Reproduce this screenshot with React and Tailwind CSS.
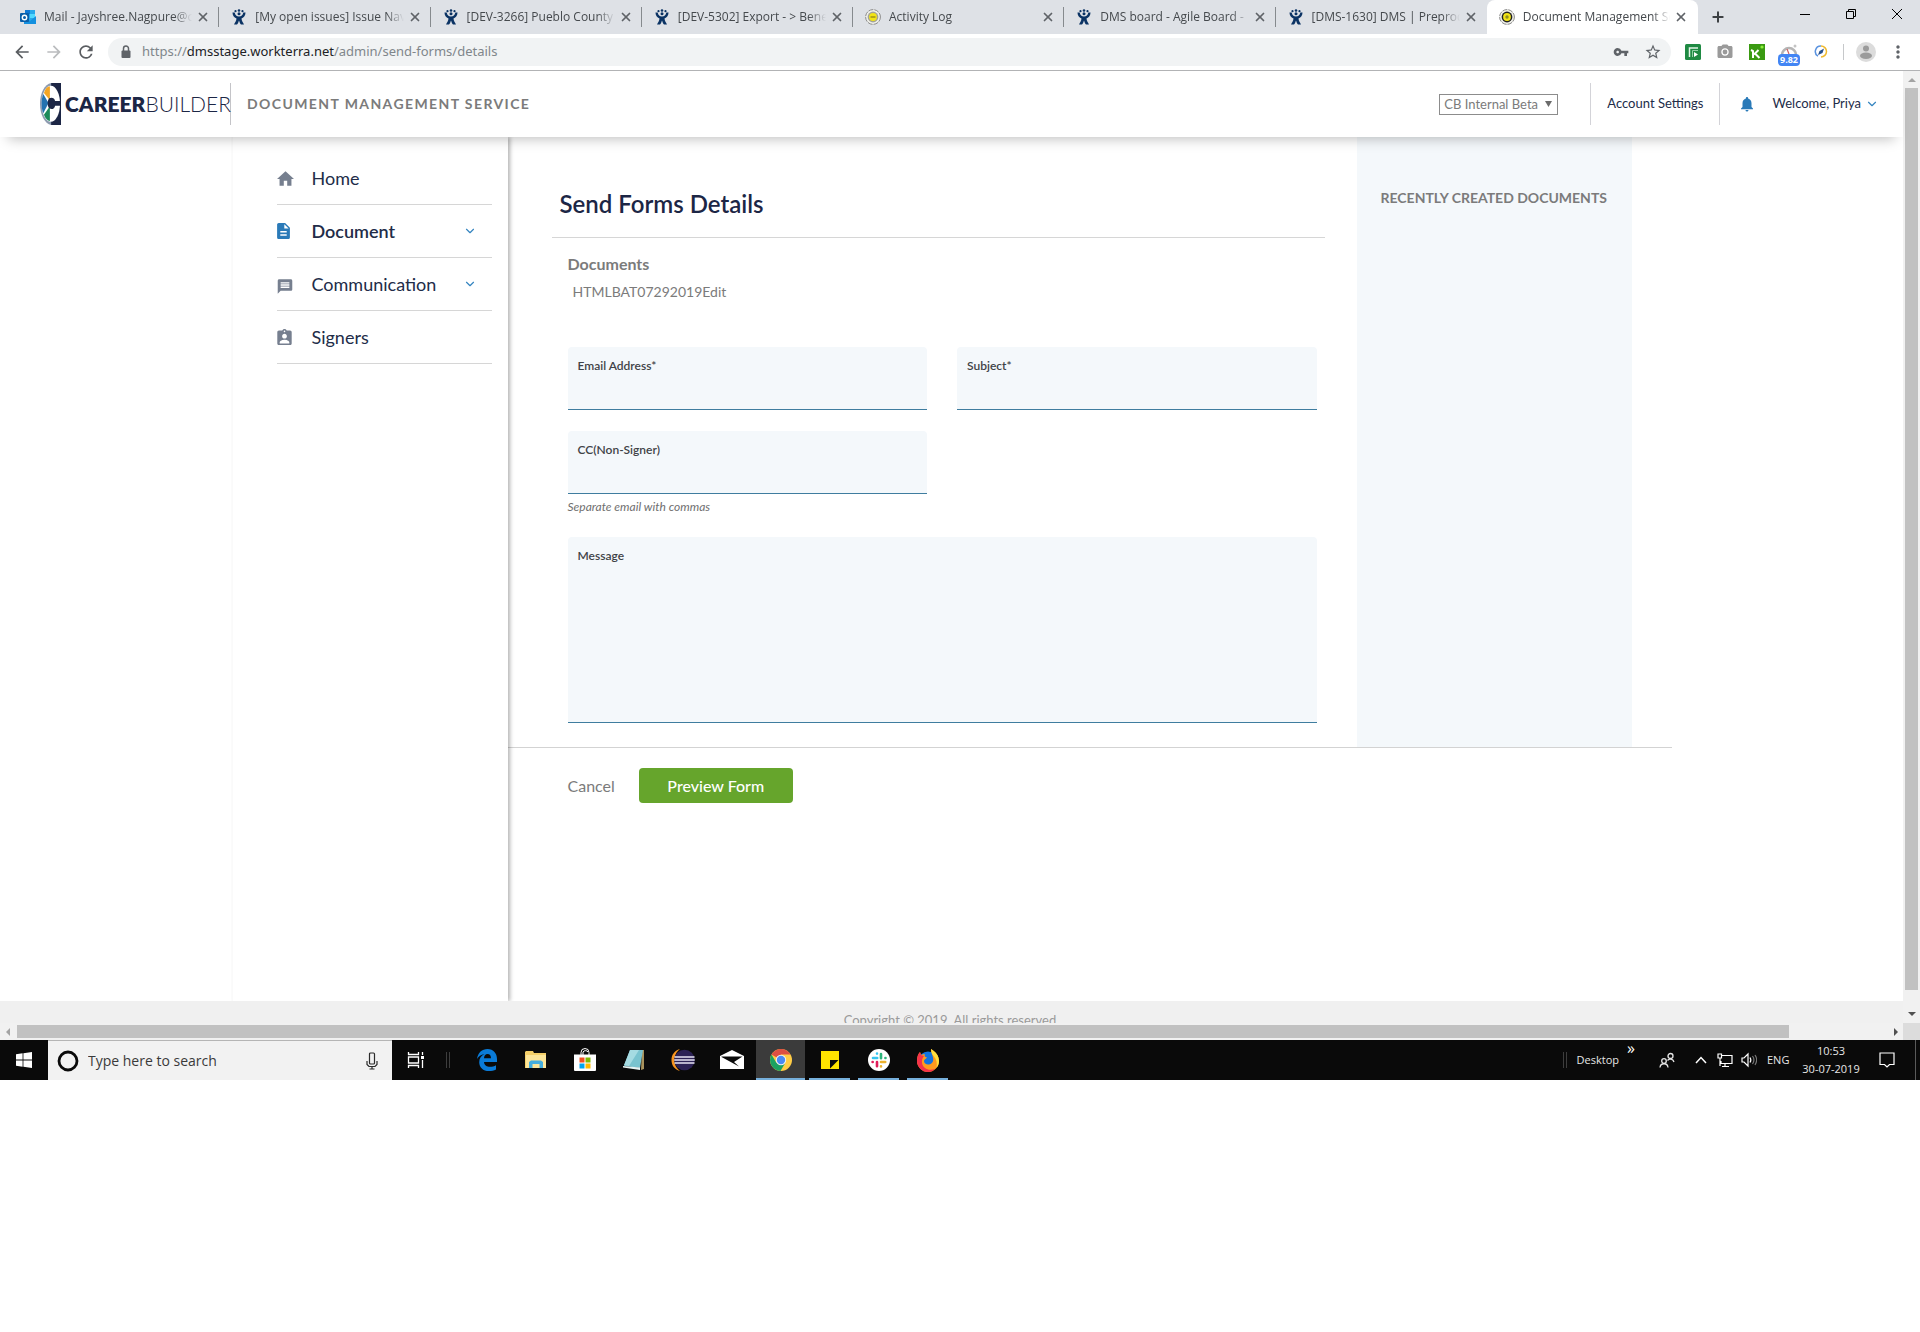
import { useState } from 'react';
import { MdVpnKey, MdStarBorder, MdCameraAlt, MdRefresh, MdArrowBack, MdArrowForward, MdLock, MdMoreVert, MdNotifications } from 'react-icons/md';
import { ChevronDown, X, Plus } from 'lucide-react';

const tabs = [
  { title: 'Mail - Jayshree.Nagpure@c', icon: 'outlook' },
  { title: '[My open issues] Issue Navi', icon: 'jira' },
  { title: '[DEV-3266] Pueblo County', icon: 'jira' },
  { title: '[DEV-5302] Export - > Bene', icon: 'jira' },
  { title: 'Activity Log', icon: 'seal' },
  { title: 'DMS board - Agile Board -', icon: 'jira' },
  { title: '[DMS-1630] DMS | Preprod', icon: 'jira' },
  { title: 'Document Management Se', icon: 'target', active: true },
];

const navItems = [
  { label: 'Home', icon: 'home' },
  { label: 'Document', icon: 'document', active: true, expandable: true },
  { label: 'Communication', icon: 'message', expandable: true },
  { label: 'Signers', icon: 'signer' },
];

const taskbarApps = [
  { name: 'edge' },
  { name: 'explorer' },
  { name: 'store' },
  { name: 'notepad' },
  { name: 'eclipse' },
  { name: 'mail' },
  { name: 'chrome', open: true, focused: true },
  { name: 'sticky', open: true },
  { name: 'slack', open: true },
  { name: 'firefox', open: true },
];

function TabIcon({ name }) {
  if (name === 'outlook') {
    return (
      <svg className="w-4 h-4 shrink-0" viewBox="0 0 16 16">
        <path d="M5 1h10v11H5z" fill="#28a8ea" />
        <path d="M5 1h5v4H5z" fill="#0f78d4" />
        <path d="M10 5h5v4h-5z" fill="#50d9ff" />
        <path d="M4 8l6 4 6-5v8H4z" fill="#1490df" />
        <rect y="4" width="9" height="9" rx="1" fill="#0a5ea8" />
        <circle cx="4.5" cy="8.5" r="2.2" fill="none" stroke="#fff" strokeWidth="1.4" />
      </svg>
    );
  }
  if (name === 'jira') {
    return (
      <svg className="w-4 h-4 shrink-0" viewBox="0 0 16 16" fill="#0b3364">
        <circle cx="8" cy="1.5" r="1.3" />
        <circle cx="4.5" cy="2.2" r="1.1" />
        <circle cx="11.5" cy="2.2" r="1.1" />
        <circle cx="8" cy="4.8" r="1.5" />
        <path d="M1.5 3.5h2.2c.4 2.6 2 4 4.3 4s3.9-1.4 4.3-4h2.2c0 3-1.5 5-4 6 .2 2.5 1.5 4 2.5 6h-3c-1-1-1.5-2.500-2-4-.5 1.500-1 3-2 4H3c1-2 2.300-3.500 2.500-6-2.500-1-4-3-4-6z" />
      </svg>
    );
  }
  return (
    <svg className="w-4 h-4 shrink-0" viewBox="0 0 16 16">
      <circle cx="8" cy="8" r="7.4" fill="#f0f0ea" stroke="#8b8b8b" strokeWidth="1" strokeDasharray="5 1" />
      <circle cx="8" cy="8" r="5.4" fill={name === 'target' ? '#222' : '#a3a39a'} />
      <circle cx="8" cy="8" r="3.9" fill="#f2e416" />
      {name === 'target' ? (
        <circle cx="8" cy="8" r="1.7" fill="#8f8d20" />
      ) : (
        <path d="M5.5 8h5" stroke="#8a7d1c" strokeWidth="1.2" />
      )}
    </svg>
  );
}

function TabStrip() {
  return (
    <div className="flex h-[34px] bg-[#dee1e6] pl-2">
      <div className="grid flex-1 max-w-[1690px] grid-cols-8">
        {tabs.map((tab, i) => (
          <div
            key={tab.title}
            className={`flex min-w-0 items-center pl-3 ${tab.active ? 'bg-white rounded-t-lg pr-2.5' : ''}`}
          >
            <TabIcon name={tab.icon} />
            <span className="ml-2 flex-1 min-w-0 overflow-hidden whitespace-nowrap text-xs text-[#45494d] [mask-image:linear-gradient(to_right,black_88%,transparent)]">
              {tab.title}
            </span>
            <button type="button" aria-label="Close tab" className="ml-1 text-[#5f6368]">
              <X className="w-3.5 h-3.5" strokeWidth={3} />
            </button>
            {!tab.active && <span className={`ml-2 w-px h-5 ${i === 6 ? 'bg-transparent' : 'bg-[#868a8e]'}`}></span>}
          </div>
        ))}
      </div>
      <button type="button" aria-label="New tab" className="ml-3 text-[#3c4043]">
        <Plus className="w-4 h-4" strokeWidth={3} />
      </button>
      <div className="ml-auto flex h-7 items-center">
        <button type="button" aria-label="Minimize" className="w-[46px] flex justify-center">
          <svg className="w-3 h-3" viewBox="0 0 12 12" stroke="#000"><path d="M1 6.500h10" /></svg>
        </button>
        <button type="button" aria-label="Restore" className="w-[46px] flex justify-center">
          <svg className="w-3 h-3" viewBox="0 0 12 12" fill="none" stroke="#000"><path d="M1.500 3.500h7v7h-7zM3.500 3.500v-2h7v7h-2" /></svg>
        </button>
        <button type="button" aria-label="Close window" className="w-[46px] flex justify-center">
          <svg className="w-3 h-3" viewBox="0 0 12 12" stroke="#000"><path d="M1 1l10 10M11 1L1 11" /></svg>
        </button>
      </div>
    </div>
  );
}

function Toolbar() {
  return (
    <div className="flex h-[37px] items-center border-b border-[#b2b3b5] bg-white pl-1.5 pr-3">
      <button type="button" aria-label="Back" className="w-8 flex justify-center text-[#5a5d61]"><MdArrowBack className="w-5 h-5" /></button>
      <button type="button" aria-label="Forward" className="w-8 flex justify-center text-[#babcbe]"><MdArrowForward className="w-5 h-5" /></button>
      <button type="button" aria-label="Reload" className="w-8 flex justify-center text-[#5a5d61]"><MdRefresh className="w-5 h-5" /></button>
      <div className="ml-1.5 flex h-7 flex-1 items-center rounded-full bg-[#f1f3f4] pl-2.5 pr-0.5">
        <svg className="w-4 h-3.5" viewBox="0 0 16 14"><path d="M5.500 6V3.500a2.500 2.500 0 015 0V6" fill="none" stroke="#5f6368" strokeWidth="1.500" /><rect x="3.500" y="5.500" width="9" height="7.500" rx="1" fill="#5f6368" /></svg>
        <div className="ml-2 flex-1 font-['Noto_Sans','Open_Sans',sans-serif] text-[13px] text-[#80868b]">
          https://<span className="text-[#202124]">dmsstage.workterra.net</span>/admin/send-forms/details
        </div>
        <button type="button" aria-label="Saved passwords" className="w-8 flex justify-center text-[#5f6368]"><MdVpnKey className="w-4 h-4" /></button>
        <button type="button" aria-label="Bookmark" className="w-8 flex justify-center text-[#5f6368]"><MdStarBorder className="w-[18px] h-[18px]" /></button>
      </div>
      <div className="ml-1.5 flex items-center">
        <div className="w-8 flex justify-center">
          <svg className="w-4 h-4" viewBox="0 0 16 16">
            <rect width="16" height="16" rx="1.5" fill="#1f8a43" />
            <path d="M4.500 13V4h8.500" fill="none" stroke="#e4f5e8" strokeWidth="1.500" />
            <path d="M7.500 13V6.500H13" fill="none" stroke="#8fcfa3" strokeWidth="1" />
            <path d="M9 8l4 2.500L9 13z" fill="#fff" />
          </svg>
        </div>
        <div className="w-8 flex justify-center text-[#9a9a9a]"><MdCameraAlt className="w-[18px] h-[18px]" /></div>
        <div className="w-8 flex justify-center">
          <svg className="w-4 h-4" viewBox="0 0 16 16">
            <rect width="16" height="16" fill="#3a9a12" />
            <path d="M2 6l2 1v7M5 10.500L9.500 6M6 9.500l4.500 4.500" fill="none" stroke="#fff" strokeWidth="2" />
            <circle cx="13" cy="3" r="1.600" fill="#8df03a" />
          </svg>
        </div>
        <div className="relative w-8 h-7 flex justify-center">
          <svg className="mt-1.5 w-4 h-4" viewBox="0 0 16 16" fill="none">
            <path d="M1 11a7 7 0 0114 0" stroke="#b5b5b5" strokeWidth="2.500" />
            <path d="M8 10L6 5" stroke="#d06060" strokeWidth="1.200" />
            <circle cx="14" cy="2" r="1.500" fill="#c4c4c4" />
          </svg>
          <span className="absolute bottom-0 left-[5px] right-[5px] rounded-sm bg-[#4285f4] text-center text-[9px] font-bold leading-3 text-white">9.82</span>
        </div>
        <div className="w-8 flex justify-center">
          <svg className="w-3.5 h-3.5" viewBox="0 0 14 14" fill="none">
            <path d="M7 1a5.500 5.500 0 00-3 10.200" stroke="#5a93e0" strokeWidth="1.500" />
            <path d="M7 1a5.500 5.500 0 010 11" stroke="#f0b92d" strokeWidth="1.500" />
            <path d="M4 10l1.500-4L10 3.500 8.500 8z" fill="#27508c" />
          </svg>
        </div>
      </div>
      <span className="ml-1.5 h-4 w-px bg-[#c6c8ca]"></span>
      <svg className="ml-3 w-5 h-5" viewBox="0 0 20 20">
        <circle cx="10" cy="10" r="10" fill="#dcdcdc" />
        <circle cx="10" cy="6.500" r="3" fill="#9b9b9b" />
        <ellipse cx="10" cy="13.800" rx="6" ry="3.200" fill="#9b9b9b" />
      </svg>
      <button type="button" aria-label="Menu" className="ml-3 text-[#5f6368]"><MdMoreVert className="w-5 h-5" /></button>
    </div>
  );
}

function Logo() {
  return (
    <div className="flex h-[42px] w-[191px] items-center border-r border-[#c4c4c8] text-[#1c2645]">
      <svg className="w-[21px] h-[42px] shrink-0" viewBox="0 0 64 126" preserveAspectRatio="none">
        <path d="M34 0h30v126H34C14 122 0 94 0 62S14 4 34 0z" fill="#8d9bb0" />
        <path d="M34 0h30v126H34z" fill="#1c2645" />
        <ellipse cx="33" cy="62" rx="28" ry="54" fill="#fff" />
        <path d="M30 52L12 30C16 17 22 11 30 10z" fill="#f5a623" />
        <path d="M26 60L10 33c-7 16-7 42 0 58z" fill="#2372b0" />
        <path d="M30 70L12 95c5 12 11 18 18 19z" fill="#1b8a5a" />
        <path d="M28 46c9-4 16 0 18 8h18v14H46c-2 9-9 13-18 8-6-7-6-23 0-30z" fill="#1c2645" />
      </svg>
      <span className="ml-1 whitespace-nowrap text-[21px] font-light leading-10">
        <b className="font-extrabold">CAREER</b>BUILDER
      </span>
    </div>
  );
}

function PageHeader() {
  const [company, setCompany] = useState('CB Internal Beta');

  return (
    <header className="relative z-10 flex h-[66px] items-center bg-white pl-10 pr-6 shadow-[0_10px_12px_-8px_rgba(0,0,0,0.25)]">
      <Logo />
      <span className="ml-4 whitespace-nowrap text-sm font-bold tracking-widest text-[#7b7b7b]">DOCUMENT MANAGEMENT SERVICE</span>
      <div className="ml-auto flex items-center text-[13px] text-[#222c48]">
        <div className="relative mr-8">
          <select
            aria-label="Company"
            value={company}
            onChange={(e) => setCompany(e.target.value)}
            className="block w-[119px] h-[21px] appearance-none border border-[#8c8c8c] bg-white pl-1 text-[13px] leading-4 text-[#7b7b7b]"
          >
            <option>CB Internal Beta</option>
          </select>
          <svg className="pointer-events-none absolute right-1.5 top-[7px] w-[7px] h-1.5" viewBox="0 0 7 6" fill="#6b6b6b"><path d="M0 0h7L3.500 6z" /></svg>
        </div>
        <a href="#account" className="flex h-[42px] items-center border-x border-[#d3d3d8] px-4">Account Settings</a>
        <MdNotifications className="ml-3 h-[18px] w-[30px] text-[#2a7ab8]" />
        <button type="button" className="ml-2.5 flex items-center gap-1">
          Welcome, Priya
          <ChevronDown className="w-3.5 h-3.5 text-[#3585c0]" strokeWidth={2} />
        </button>
      </div>
    </header>
  );
}

function NavIcon({ name }) {
  if (name === 'home') {
    return <svg className="w-[17px] h-[15px]" viewBox="2 3 20 17" fill="#767f8f"><path d="M10 20v-6h4v6h5v-8h3L12 3 2 12h3v8z" /></svg>;
  }
  if (name === 'document') {
    return (
      <svg className="w-[13px] h-4" viewBox="4 2 16 20" fill="#2a7ab8">
        <path d="M14 2H6c-1.100 0-1.990.9-1.990 2L4 20c0 1.100.89 2 1.990 2H18c1.100 0 2-.9 2-2V8l-6-6zm2 16H8v-2h8v2zm0-4H8v-2h8v2zm-3-5V3.500L18.500 9H13z" />
      </svg>
    );
  }
  if (name === 'message') {
    return (
      <svg className="mt-1 w-4 h-[15px]" viewBox="1 2 22 20" fill="#767f8f">
        <path d="M20 2H4c-1.100 0-1.990.9-1.990 2L2 22l4-4h14c1.100 0 2-.9 2-2V4c0-1.100-.9-2-2-2zm-2 12H6v-2h12v2zm0-3H6V9h12v2zm0-3H6V6h12v2z" />
      </svg>
    );
  }
  return (
    <svg className="w-[15px] h-4" viewBox="3 1 18 20" fill="#767f8f">
      <path d="M19 3h-4.180C14.400 1.840 13.300 1 12 1c-1.300 0-2.400.84-2.820 2H5c-1.100 0-2 .9-2 2v14c0 1.100.9 2 2 2h14c1.100 0 2-.9 2-2V5c0-1.100-.9-2-2-2zm-7 0c.55 0 1 .45 1 1s-.45 1-1 1-1-.45-1-1 .45-1 1-1zm0 4c1.660 0 3 1.340 3 3s-1.340 3-3 3-3-1.340-3-3 1.340-3 3-3zm6 12H6v-1.400c0-2 4-3.100 6-3.100s6 1.100 6 3.100V19z" />
    </svg>
  );
}

function Sidebar() {
  return (
    <nav className="w-[276px] shrink-0 border-l border-[#fafafa] pl-11 pr-4 pt-[15px] shadow-[2px_0_4px_rgba(0,0,0,0.3)] [clip-path:inset(0_-8px_0_0)]">
      {navItems.map((item) => (
        <a
          key={item.label}
          href={`#${item.label.toLowerCase()}`}
          className={`flex h-[53px] items-center border-b border-[#d6d6d6] text-lg text-[#222c48] ${item.active ? 'font-semibold' : ''}`}
        >
          <span className="w-[35px] shrink-0"><NavIcon name={item.icon} /></span>
          <span className="flex-1">{item.label}</span>
          {item.expandable && <ChevronDown className="mr-[15px] w-3.5 h-3.5 text-[#3585c0]" strokeWidth={2} />}
        </a>
      ))}
    </nav>
  );
}

function Field({ id, label, multiline }) {
  const Control = multiline ? 'textarea' : 'input';
  return (
    <div className={`flex flex-col rounded-t-sm border-b border-[#3f7d9f] bg-[#f4f8fb] px-2.5 pt-[11px] ${multiline ? 'h-[186px]' : 'h-[63px]'}`}>
      <label htmlFor={id} className="text-xs font-semibold text-[#3f4347]">{label}</label>
      <Control id={id} name={id} className="w-full min-h-0 flex-1 resize-none bg-transparent text-sm text-[#3f4347] outline-none" />
    </div>
  );
}

function SendFormsDetails() {
  const handleSubmit = (e) => {
    e.preventDefault();
  };

  return (
    <form onSubmit={handleSubmit} className="flex-1">
      <div className="flex border-b border-[#d3d3d3]">
        <div className="flex-1 pl-11 pr-8 pb-6">
          <h1 className="mt-[51px] border-b border-[#d6d6d6] pb-[17px] pl-2 text-2xl font-semibold text-[#1c2645]">Send Forms Details</h1>
          <div className="pl-4 pr-2">
            <h2 className="mt-3.5 text-base font-bold text-[#7b7b7b]">Documents</h2>
            <p className="mt-1.5 pl-[5px] text-sm text-[#7b7b7b]">HTMLBAT07292019Edit</p>
            <div className="mt-[45px] grid grid-cols-2 gap-x-[30px] gap-y-[21px]">
              <Field id="email" label="Email Address*" />
              <Field id="subject" label="Subject*" />
              <Field id="cc" label="CC(Non-Signer)" />
            </div>
            <p className="mt-[5px] mb-[22px] text-xs italic text-[#6f6f6f]">Separate email with commas</p>
            <Field id="message" label="Message" multiline />
          </div>
        </div>
        <aside className="mr-10 w-[275px] bg-[#f4f8fb] pt-[51px] pl-6">
          <h3 className="whitespace-nowrap text-sm font-bold text-[#7b7b7b]">RECENTLY CREATED DOCUMENTS</h3>
        </aside>
      </div>
      <div className="flex items-center gap-6 pl-[60px] pt-5">
        <button type="button" className="text-base text-[#7b7b7b]">Cancel</button>
        <button type="submit" className="h-[35px] w-[154px] rounded-sm bg-[#66a52c] text-base font-medium text-white">Preview Form</button>
      </div>
    </form>
  );
}

function AppIcon({ name }) {
  if (name === 'edge') {
    return (
      <svg className="w-5 h-[22px]" viewBox="0 0 20 22">
        <path d="M0 10C1 3.500 5 0 10.500 0 16.500 0 20 4.500 20 10v3H7c.3 3.500 3 4.800 6 4.800 2.200 0 4.200-.6 6-1.600v4.200c-2 1-4.300 1.600-7 1.600-6 0-9.800-3.600-9.800-8.800 0-3.700 2-6.700 5.200-8.200C4 5.700 1.500 7.200 0 10zm7-.8h7C14 6.500 12.700 5 10.500 5S7.200 6.800 7 9.200z" fill="#0a7bd8" />
      </svg>
    );
  }
  if (name === 'explorer') {
    return (
      <svg className="w-[22px] h-5" viewBox="0 0 22 20">
        <path d="M0 2l1-1h7l1 2h12v15H0z" fill="#f5d069" />
        <path d="M1 5h20v13H1z" fill="#fde69a" />
        <path d="M4 18v-6l2-1.500h10l2 1.500v6h-3.500v-4h-7v4z" fill="#45aedd" />
      </svg>
    );
  }
  if (name === 'store') {
    return (
      <svg className="w-6 h-6" viewBox="0 0 24 24">
        <path d="M8 7V4.500a4 4 0 018 0V7M10 7V4a3 3 0 015 0" fill="none" stroke="#fff" />
        <path d="M1 6.500h22V22a1 1 0 01-1 1H2a1 1 0 01-1-1z" fill="#fff" />
        <path d="M6.500 9.500h5v5h-5z" fill="#f25022" />
        <path d="M12.500 9.500h5v5h-5z" fill="#7fba00" />
        <path d="M6.500 15.500h5v5h-5z" fill="#00a4ef" />
        <path d="M12.500 15.500h5v5h-5z" fill="#ffb900" />
      </svg>
    );
  }
  if (name === 'notepad') {
    return (
      <svg className="w-6 h-[22px]" viewBox="0 0 24 22">
        <path d="M20 1h2v19l-3 1z" fill="#a8925c" />
        <path d="M8 1h13l-3 18-16-2z" fill="#79c3cf" />
        <path d="M8 1h9L7 17l-5-1z" fill="#a5dbe2" />
        <path d="M1 17l17 1.500V21L1 18.500z" fill="#e5f2f2" />
      </svg>
    );
  }
  if (name === 'eclipse') {
    return (
      <svg className="w-6 h-[22px]" viewBox="0 0 24 22">
        <path d="M9 0C3 2 .5 6 .5 11S3 20 9 22C5 19 3.500 15 3.500 11S5 3 9 0z" fill="#f7941e" />
        <circle cx="13.500" cy="11" r="10.300" fill="#2c2255" />
        <path d="M3.500 8h20M3.200 11h20.500M3.500 14h20" stroke="#e6e3f2" strokeWidth="1.500" />
      </svg>
    );
  }
  if (name === 'mail') {
    return (
      <svg className="w-6 h-5" viewBox="0 0 24 20">
        <path d="M0 6l12-6 12 6v13H0z" fill="#fff" />
        <path d="M1.500 6.500h21L14 12l5 4.500L1.500 7z" fill="#0a0a0a" />
      </svg>
    );
  }
  if (name === 'chrome') {
    return (
      <svg className="w-[22px] h-[22px]" viewBox="0 0 22 22">
        <circle cx="11" cy="11" r="11" fill="#ffcd46" />
        <path d="M11 11L1.500 5.500A11 11 0 0120.500 5.500H11z" fill="#dd4f43" />
        <path d="M1.500 5.500A11 11 0 0010.500 22L15.500 13.500 11 16 6.200 13.500z" fill="#1ba261" />
        <circle cx="11" cy="11" r="5.200" fill="#f3f3f3" />
        <circle cx="11" cy="11" r="4.200" fill="#4a8af4" />
      </svg>
    );
  }
  if (name === 'sticky') {
    return (
      <svg className="w-[18px] h-[18px]" viewBox="0 0 18 18">
        <path d="M0 0h18v18H0z" fill="#ffe400" />
        <path d="M9 9h8.500L9 17.500z" fill="#0a0a0a" />
      </svg>
    );
  }
  if (name === 'slack') {
    return (
      <svg className="w-[22px] h-[22px]" viewBox="0 0 22 22" fill="none" strokeWidth="2.600" strokeLinecap="round">
        <circle cx="11" cy="11" r="11" fill="#fff" />
        <path d="M9 4.500v.1M5 9h4.200" stroke="#36c5f0" />
        <path d="M13 5v4.200M17.400 9h.1" stroke="#2eb67d" />
        <path d="M13 13h4.200M13 17.400v.1" stroke="#ecb22e" />
        <path d="M9 13v4.200M4.600 13h.1" stroke="#e01e5a" />
      </svg>
    );
  }
  return (
    <svg className="w-6 h-6" viewBox="0 0 24 24">
      <circle cx="12" cy="13" r="9.500" fill="#1273e0" />
      <path d="M15 1c5 3 8 7 8 12 0 6-5 11-11 11S1 19 1 13c0-4 1-7 3-9l1 3c1-1 3-1 4-.5C8 8 9 9 11 9.500c-1 2-3 1.500-3 3.500 0 2.500 2.500 4 5 3.500 3-.5 5-3 4-7-.5-3-2-5-2-8.500z" fill="#ff9a1f" />
      <path d="M4 4c-2 2-3 5-3 9 0 6 5 11 11 11 3 0 5-1 7-3-6 2-12 0-13-6-.5-3 .5-5 2-7l-3-1z" fill="#f5324a" />
      <path d="M15 1c5 3 8 7 8 12 0 3-1 5-2.500 7 1-5 0-9-3-12-1.500-2-2.500-4-2.500-7z" fill="#ffdf3d" />
    </svg>
  );
}

function Taskbar() {
  return (
    <footer className="flex h-10 bg-[#0a0a0a] text-[11px] text-[#e6e6e6]">
      <button type="button" aria-label="Start" className="w-12 flex items-center justify-center">
        <svg className="w-4 h-4" viewBox="0 0 16 16" fill="#fff"><path d="M0 2.200L6.600 1.300v6.200H0zM7.400 1.200L16 0v7.500H7.400zM0 8.400h6.600v6.300L0 13.800zM7.400 8.400H16V16l-8.600-1.200z" /></svg>
      </button>
      <div className="flex w-[344px] items-center border-t border-[#b5b5b5] bg-[#f2f2f2] pl-2 pr-3.5">
        <svg className="w-6 h-6 shrink-0" viewBox="0 0 24 24" fill="none"><circle cx="12" cy="12" r="9" stroke="#0a0a0a" strokeWidth="2.800" /></svg>
        <input aria-label="Search" placeholder="Type here to search" className="ml-2 min-w-0 flex-1 bg-transparent text-sm outline-none placeholder:text-[#3a3a3a]" />
        <svg className="w-3 h-[18px]" viewBox="0 0 12 18" fill="none" stroke="#2b2b2b" strokeWidth="1.200"><rect x="3.500" y="1" width="5" height="11" rx="1" /><path d="M1 9v3.500l2 2h6l2-2V9M6 14.500V17M3.500 17h5" /></svg>
      </div>
      <button type="button" aria-label="Task view" className="w-12 flex items-center justify-center">
        <svg className="w-[18px] h-[18px]" viewBox="0 0 18 18" fill="none" stroke="#fff" strokeWidth="1.300"><path d="M1.500 1v2.500h10V1M1.500 17v-2.500h10V17M1.500 6h10v6h-10zM15.500 1v3M15.500 9v8" /><path d="M14 5h3v3h-3z" fill="#fff" stroke="none" /></svg>
      </button>
      <span className="ml-1.5 h-4 w-1 self-center border-x border-[#3d3d3d]"></span>
      <div className="ml-3 flex">
        {taskbarApps.map((app) => (
          <button
            key={app.name}
            type="button"
            aria-label={app.name}
            className={`relative flex w-[49px] items-center justify-center ${app.focused ? 'bg-[#3b3b3b]' : ''}`}
          >
            <AppIcon name={app.name} />
            {app.open && <span className={`absolute bottom-0 h-0.5 bg-[#76b0dc] ${app.focused ? 'inset-x-0' : 'inset-x-1'}`}></span>}
          </button>
        ))}
      </div>
      <div className="ml-auto flex items-center">
        <span className="h-4 w-1 border-x border-[#3d3d3d]"></span>
        <span className="ml-2.5">Desktop</span>
        <span className="ml-2 self-start text-base leading-4 text-white">»</span>
        <svg className="ml-6 w-4 h-4" viewBox="0 0 16 16" fill="none" stroke="#e6e6e6" strokeWidth="1.300"><circle cx="11.500" cy="4" r="2.500" /><path d="M8.500 8.500c1.500-2 5.500-2 6.500 1.500" /><circle cx="5" cy="9" r="2.300" /><path d="M1 15.500c.5-5 7.500-5 8 0" /></svg>
        <svg className="ml-5 w-3 h-2" viewBox="0 0 12 8" fill="none" stroke="#fff" strokeWidth="1.500"><path d="M1 7l5-5.500L11 7" /></svg>
        <svg className="ml-2.5 w-4 h-4" viewBox="0 0 16 16" fill="none" stroke="#fff" strokeWidth="1.200"><path d="M5 3.500h10v8H4V9M8 11.500v3M5 14.500h7M1 2h3.500v4H1zM3 6v8" /></svg>
        <svg className="ml-2 w-4 h-4" viewBox="0 0 16 16" fill="none" stroke="#fff" strokeWidth="1.200"><path d="M1 6h2l4-4v12L3 10H1z" /><path d="M9 5.500c1 1.500 1 3.500 0 5" /><path d="M11.500 4c1.800 2.500 1.800 5.500 0 8M14 3c2 3 2 7 0 10" stroke="#777" /></svg>
        <span className="ml-2.5 w-6">ENG</span>
        <div className="ml-2.5 w-[60px] text-center leading-[18px]">
          10:53<br />30-07-2019
        </div>
        <svg className="ml-[18px] w-4 h-4" viewBox="0 0 16 16" fill="none" stroke="#fff" strokeWidth="1.200"><path d="M1 1h14v11.500h-4.500L8 15l-2.500-2.500H1z" /></svg>
        <span className="ml-5 mr-1 h-10 w-px bg-[#5a5a5a]"></span>
      </div>
    </footer>
  );
}

export default function App() {
  return (
    <div className="bg-white font-['Open_Sans','Noto_Sans',sans-serif]">
      <TabStrip />
      <Toolbar />
      <div className="flex">
        <div className="flex min-h-[952px] flex-1 flex-col font-['Lato',sans-serif]">
          <PageHeader />
          <main className="mx-auto flex w-full max-w-[1440px] flex-1">
            <Sidebar />
            <SendFormsDetails />
          </main>
          <div className="h-[22px] overflow-hidden bg-[#f0f0f0] pt-[9px] text-center text-[13px] leading-5 text-[#9a9a9a]">
            Copyright © 2019. All rights reserved.
          </div>
        </div>
        <div className="flex w-[17px] flex-col bg-[#f1f1f1] px-0.5">
          <svg className="h-[17px]" viewBox="0 0 13 17" fill="#a3a3a3"><path d="M3 11h8L7 7z" /></svg>
          <div className="flex-1"><div className="h-[902px] bg-[#c1c1c1]"></div></div>
          <svg className="h-[17px]" viewBox="0 0 13 17" fill="#505050"><path d="M3 6h8l-4 4z" /></svg>
        </div>
      </div>
      <div className="flex h-[17px] bg-[#f1f1f1]">
        <svg className="w-[17px]" viewBox="0 0 17 17" fill="#a3a3a3"><path d="M10 5v8L6 9z" /></svg>
        <div className="flex-1 pt-0.5 pb-0.5 pr-[97px]"><div className="h-full bg-[#c1c1c1]"></div></div>
        <svg className="w-[17px]" viewBox="0 0 17 17" fill="#505050"><path d="M8 5v8l4-4z" /></svg>
        <div className="w-[17px] bg-[#dcdcdc]"></div>
      </div>
      <Taskbar />
    </div>
  );
}
